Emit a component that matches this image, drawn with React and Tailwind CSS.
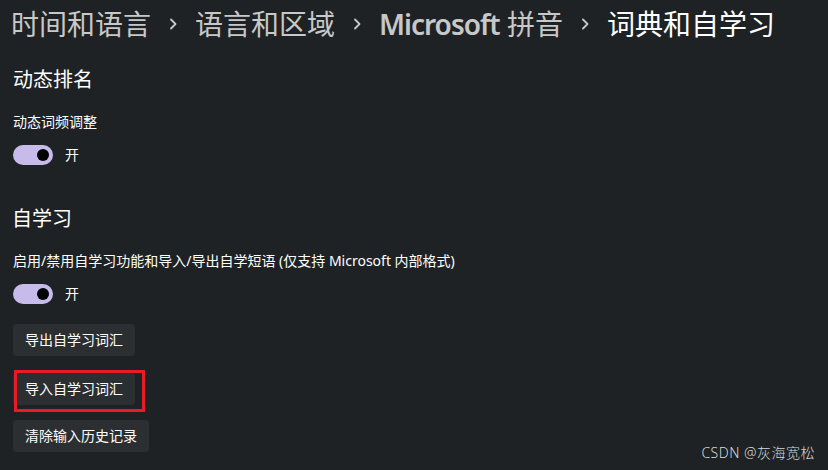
import React from "react";

const font = { fontFamily: '"Noto Sans", "Noto Sans CJK SC", sans-serif' };

function Chevron() {
  return (
    <svg width="28" height="28" viewBox="0 0 28 28" className="mx-[8px]" aria-hidden="true">
      <path d="M12 9.5 L16.5 14 L12 18.5" fill="none" stroke="#c8c8c8" strokeWidth="1.8" strokeLinecap="round" strokeLinejoin="round" />
    </svg>
  );
}

function Toggle() {
  return (
    <div className="flex items-center h-[20px] gap-[12px]">
      <div className="w-[40px] h-[20px] rounded-full bg-[#c6bbea] flex items-center justify-end pr-[4px]">
        <div className="w-[12px] h-[12px] rounded-full bg-black" />
      </div>
      <span className="text-[14px] leading-[20px] text-white">开</span>
    </div>
  );
}

function Btn({ children }) {
  return (
    <div className="h-[32px] px-[12px] rounded-[4px] bg-[#2b2f31] text-[14px] leading-[32px] text-white w-fit">
      {children}
    </div>
  );
}

export default function App() {
  return (
    <div className="relative w-[828px] h-[470px] bg-[#1e2224] overflow-hidden pl-[13px]" style={font}>
      <div className="h-[48px] flex items-center -ml-[2px] text-[28px] font-normal">
        <span className="text-[#c8c8c8]">时间和语言</span>
        <Chevron />
        <span className="text-[#c8c8c8]">语言和区域</span>
        <Chevron />
        <span className="text-[#c8c8c8]">
          <span className="font-semibold tracking-[-1px]">Microsoft</span> 拼音
        </span>
        <Chevron />
        <span className="text-white">词典和自学习</span>
      </div>

      <div className="mt-[18px] h-[28px] text-[20px] leading-[28px] font-normal text-white">动态排名</div>
      <div className="mt-[18px] h-[20px] text-[14px] leading-[20px] text-white">动态词频调整</div>
      <div className="mt-[13px]"><Toggle /></div>

      <div className="mt-[40px] h-[28px] text-[20px] leading-[28px] font-normal text-white -ml-[1px]">自学习</div>
      <div className="mt-[18px] h-[20px] text-[14px] leading-[20px] text-white">启用/禁用自学习功能和导入/导出自学短语 (仅支持 Microsoft 内部格式)</div>
      <div className="mt-[13px]"><Toggle /></div>

      <div className="mt-[20px]"><Btn>导出自学习词汇</Btn></div>
      <div className="mt-[17px] relative w-fit">
        <Btn>导入自学习词汇</Btn>
        <div className="absolute left-[1px] top-[-3px] w-[131px] h-[42px] border-[3px] border-[#e81c24]" />
      </div>
      <div className="mt-[15px]"><Btn>清除输入历史记录</Btn></div>

      <div className="absolute right-[13px] top-[444px] text-[14px] leading-[18px] tracking-[0.5px] font-light text-[#d8d8d8]">CSDN @灰海宽松</div>
    </div>
  );
}
